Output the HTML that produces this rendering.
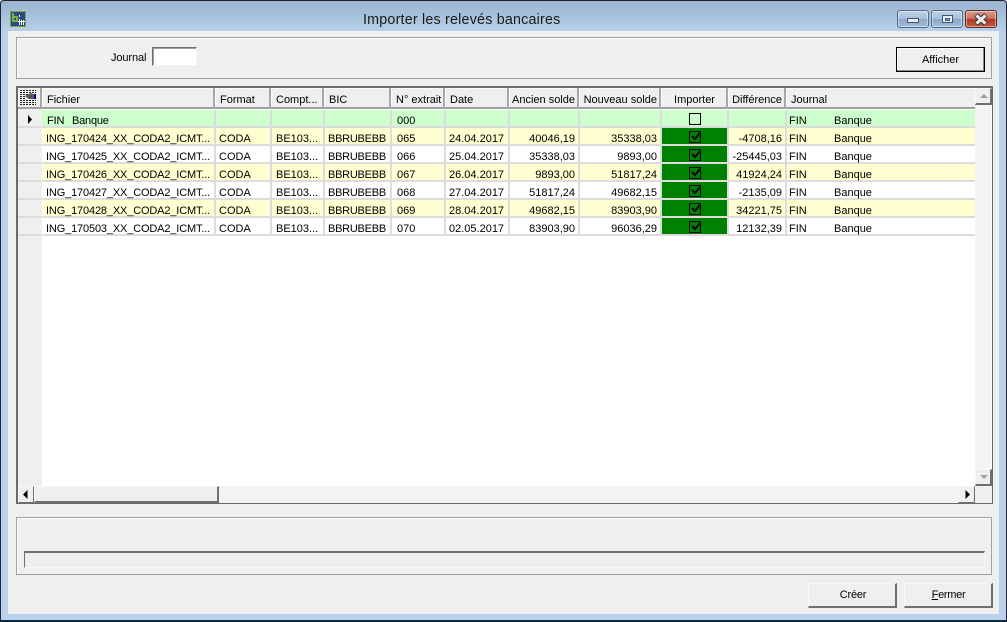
<!DOCTYPE html>
<html lang="fr"><head><meta charset="utf-8"><title>Importer les relevés bancaires</title>
<style>
*{box-sizing:border-box}
html,body{margin:0;padding:0}
body{width:1007px;height:622px;position:relative;overflow:hidden;background:#b9d1ea;font:11px "Liberation Sans",sans-serif;color:#000}
.a{position:absolute}
.t{position:absolute;white-space:nowrap;line-height:14px}
#frame{left:0;top:0;width:1007px;height:622px;background:linear-gradient(#99b4d1 0,#a3bcd8 10px,#b9d1ea 31px,#b9d1ea 100%);border-top:1px solid #222;border-left:1px solid #223;border-right:1px solid #223;border-bottom:2px solid #0c2a3a;border-radius:4px 4px 0 0}
#client{left:8px;top:31px;width:991px;height:583px;background:#efefef}
.panel{border:1px solid #a0a0a0;box-shadow:inset 1px 1px 0 #fff}
.raised{background:#efefef;border:1px solid;border-color:#f8f8f8 #707070 #707070 #f8f8f8}
.wb{position:absolute;top:10px;height:18px;border-radius:3px;border:1px solid #4f6a8a;box-shadow:inset 0 0 0 1px rgba(255,255,255,.45);background:linear-gradient(#bdd0e4 0,#aac2db 48%,#8aa8c8 50%,#a2bcd8 100%)}
.hd{position:absolute;top:88px;height:21px;background:#efefef;border-right:2px solid #a8a8a8;border-bottom:2px solid #a0a0a0;box-shadow:inset 1px 1px 0 #fbfbfb;padding-left:5px;line-height:25px;white-space:nowrap}
.r{position:absolute;left:42px;width:933px;height:18px;border-bottom:2px solid #dcdcdc;white-space:nowrap;line-height:16px}
.r span{position:absolute;top:3px;white-space:nowrap}
.r span:nth-of-type(1){letter-spacing:-.15px}
.y span:nth-of-type(4),.w span:nth-of-type(4){letter-spacing:-.25px}
.r i{position:absolute;top:0;bottom:0;width:2px;background:#dcdcdc}
.ind{position:absolute;left:18px;width:23px;height:18px;background:#efefef;border-bottom:2px solid #dcdcdc}
.y{background:#ffffd2}.w{background:#fff}.g{background:#ccffcc}
.n{text-align:right}
.gr{position:absolute;left:620px;width:65px;top:0;height:16px;background:#008000}
.cb{position:absolute;left:647px;top:3px;width:12px;height:12px;border:1px solid #000}
.btn{position:absolute;text-align:center;line-height:23px}
.dith{background:repeating-conic-gradient(#ececec 0 25%,#fbfbfb 0 50%) 0 0/2px 2px}
</style></head><body>
<div id="frame" class="a"></div>
<div class="a" style="left:10px;top:11px;width:16px;height:16px;background:#2b4a86;border:1px solid #7fa63a">
 <svg width="14" height="14" style="position:absolute;left:0;top:0"><path d="M2 1v8h4V5H2" fill="none" stroke="#9ccc3c" stroke-width="1.500"/><path d="M8 3h1v2H8zM8 7h1v6H8zM10 8h1v5h-1zM12 8h1v5h-1zM7 9h7v1H7z" fill="#fff"/></svg>
</div>
<div class="t" style="left:363px;top:11px;font-size:14.3px;line-height:18px;color:#1a1a1a;letter-spacing:.2px">Importer les relevés bancaires</div>

<div class="wb" style="left:897px;width:32px"><div class="a" style="left:9px;top:7px;width:12px;height:5px;background:#e8eef5;border:1px solid #44556a"></div></div>
<div class="wb" style="left:931px;width:32px"><div class="a" style="left:10px;top:4px;width:11px;height:8px;background:#e8eef5;border:1px solid #44556a"></div><div class="a" style="left:13px;top:7px;width:5px;height:3px;background:#8aa8c8;border:1px solid #44556a"></div></div>
<div class="wb" style="left:965px;width:32px;border-color:#5e2a22;background:linear-gradient(#d9998c 0,#c9705f 48%,#b03a22 50%,#c4563c 100%)">
 <svg class="a" style="left:7px;top:2px" width="17" height="13"><path d="M3 2l10 9M13 2L3 11" stroke="#3a3a3a" stroke-width="5"/><path d="M3.500 2.500l9 8M12.500 2.500l-9 8" stroke="#eee" stroke-width="3"/></svg>
</div>

<div id="client" class="a"></div>
<div class="a panel" style="left:16px;top:37px;width:976px;height:42px"></div>
<div class="t" style="left:111px;top:51px;letter-spacing:-.1px">Journal</div>
<div class="a" style="left:152px;top:47px;width:45px;height:19px;background:#fff;border:1px solid;border-color:#707070 #f4f4f4 #f4f4f4 #707070;box-shadow:inset 1px 1px 0 #a0a0a0"></div>
<div class="btn" style="left:896px;top:47px;width:89px;height:25px;line-height:25px;border:1px solid #000;box-shadow:inset -1px -1px 0 #8a8a8a,inset 1px 1px 0 #fff;background:#efefef">Afficher</div>

<!-- grid -->
<div class="a" style="left:16px;top:86px;width:977px;height:418px;background:#fff;border:1px solid #6a6a6a;border-top-width:2px;border-left-width:2px"></div>
<div class="a" style="left:18px;top:88px;width:24px;height:398px;background:#efefef"></div>
<div class="hd" style="left:18px;width:24px;padding:0">
 <svg width="17" height="15" style="position:absolute;left:2px;top:2px"><path d="M0 .5h16M0 2.500h16M0 4.500h9M0 6.500h6M0 8.500h6M0 10.500h16M0 12.500h16M0 14.500h16" stroke="#222" stroke-dasharray="2 1"/><path d="M5 6l6-3 4 2v4H9z" fill="#555"/><rect x="14" y="4" width="2" height="5" fill="#00009a"/></svg>
</div>
<div class="hd" style="left:42px;width:173px">Fichier</div>
<div class="hd" style="left:215px;width:56px">Format</div>
<div class="hd" style="left:271px;width:53px">Compt...</div>
<div class="hd" style="left:324px;width:67px">BIC</div>
<div class="hd" style="left:391px;width:54px">N° extrait</div>
<div class="hd" style="left:445px;width:64px">Date</div>
<div class="hd" style="left:509px;width:70px;padding:0 2px;text-align:right">Ancien solde</div>
<div class="hd" style="left:579px;width:82px;padding:0 2px;text-align:right">Nouveau solde</div>
<div class="hd" style="left:661px;width:67px;padding:0 0 0 2px;text-align:center">Importer</div>
<div class="hd" style="left:728px;width:58px;padding:0 2px;text-align:right">Différence</div>
<div class="hd" style="left:786px;width:189px;border-right:0">Journal</div>

<div class="ind" style="top:110px"><svg class="a" style="left:9px;top:5px" width="6" height="9"><path d="M1 0l4 4.500-4 4.500z" fill="#000"/></svg></div>
<div class="ind" style="top:128px"></div><div class="ind" style="top:146px"></div><div class="ind" style="top:164px"></div><div class="ind" style="top:182px"></div><div class="ind" style="top:200px"></div><div class="ind" style="top:218px"></div>

<div class="r g" style="top:110px"><i style="left:172px"></i><i style="left:228px"></i><i style="left:281px"></i><i style="left:348px"></i><i style="left:402px"></i><i style="left:466px"></i><i style="left:536px"></i><i style="left:618px"></i><i style="left:685px"></i><i style="left:743px"></i>
<span style="left:5px">FIN</span><span style="left:30px;letter-spacing:-.2px">Banque</span><span style="left:355px">000</span><div class="cb"></div><span style="left:747px">FIN</span><span style="left:792px">Banque</span></div>

<div class="r y" style="top:128px"><i style="left:172px"></i><i style="left:228px"></i><i style="left:281px"></i><i style="left:348px"></i><i style="left:402px"></i><i style="left:466px"></i><i style="left:536px"></i><i style="left:618px"></i><i style="left:685px"></i><i style="left:743px"></i>
<span style="left:4px">ING_170424_XX_CODA2_ICMT...</span><span style="left:177px">CODA</span><span style="left:234px">BE103...</span><span style="left:286px">BBRUBEBB</span><span style="left:355px">065</span><span style="left:407px">24.04.2017</span><span class="n" style="right:400px">40046,19</span><span class="n" style="right:318px">35338,03</span><div class="gr"></div><div class="cb"><svg class="a" style="left:1px;top:0" width="10" height="10"><path d="M1 4l3 3 5-6" fill="none" stroke="#000" stroke-width="2"/></svg></div><span class="n" style="right:193px">-4708,16</span><span style="left:747px">FIN</span><span style="left:792px">Banque</span></div>

<div class="r w" style="top:146px"><i style="left:172px"></i><i style="left:228px"></i><i style="left:281px"></i><i style="left:348px"></i><i style="left:402px"></i><i style="left:466px"></i><i style="left:536px"></i><i style="left:618px"></i><i style="left:685px"></i><i style="left:743px"></i>
<span style="left:4px">ING_170425_XX_CODA2_ICMT...</span><span style="left:177px">CODA</span><span style="left:234px">BE103...</span><span style="left:286px">BBRUBEBB</span><span style="left:355px">066</span><span style="left:407px">25.04.2017</span><span class="n" style="right:400px">35338,03</span><span class="n" style="right:318px">9893,00</span><div class="gr"></div><div class="cb"><svg class="a" style="left:1px;top:0" width="10" height="10"><path d="M1 4l3 3 5-6" fill="none" stroke="#000" stroke-width="2"/></svg></div><span class="n" style="right:193px">-25445,03</span><span style="left:747px">FIN</span><span style="left:792px">Banque</span></div>

<div class="r y" style="top:164px"><i style="left:172px"></i><i style="left:228px"></i><i style="left:281px"></i><i style="left:348px"></i><i style="left:402px"></i><i style="left:466px"></i><i style="left:536px"></i><i style="left:618px"></i><i style="left:685px"></i><i style="left:743px"></i>
<span style="left:4px">ING_170426_XX_CODA2_ICMT...</span><span style="left:177px">CODA</span><span style="left:234px">BE103...</span><span style="left:286px">BBRUBEBB</span><span style="left:355px">067</span><span style="left:407px">26.04.2017</span><span class="n" style="right:400px">9893,00</span><span class="n" style="right:318px">51817,24</span><div class="gr"></div><div class="cb"><svg class="a" style="left:1px;top:0" width="10" height="10"><path d="M1 4l3 3 5-6" fill="none" stroke="#000" stroke-width="2"/></svg></div><span class="n" style="right:193px">41924,24</span><span style="left:747px">FIN</span><span style="left:792px">Banque</span></div>

<div class="r w" style="top:182px"><i style="left:172px"></i><i style="left:228px"></i><i style="left:281px"></i><i style="left:348px"></i><i style="left:402px"></i><i style="left:466px"></i><i style="left:536px"></i><i style="left:618px"></i><i style="left:685px"></i><i style="left:743px"></i>
<span style="left:4px">ING_170427_XX_CODA2_ICMT...</span><span style="left:177px">CODA</span><span style="left:234px">BE103...</span><span style="left:286px">BBRUBEBB</span><span style="left:355px">068</span><span style="left:407px">27.04.2017</span><span class="n" style="right:400px">51817,24</span><span class="n" style="right:318px">49682,15</span><div class="gr"></div><div class="cb"><svg class="a" style="left:1px;top:0" width="10" height="10"><path d="M1 4l3 3 5-6" fill="none" stroke="#000" stroke-width="2"/></svg></div><span class="n" style="right:193px">-2135,09</span><span style="left:747px">FIN</span><span style="left:792px">Banque</span></div>

<div class="r y" style="top:200px"><i style="left:172px"></i><i style="left:228px"></i><i style="left:281px"></i><i style="left:348px"></i><i style="left:402px"></i><i style="left:466px"></i><i style="left:536px"></i><i style="left:618px"></i><i style="left:685px"></i><i style="left:743px"></i>
<span style="left:4px">ING_170428_XX_CODA2_ICMT...</span><span style="left:177px">CODA</span><span style="left:234px">BE103...</span><span style="left:286px">BBRUBEBB</span><span style="left:355px">069</span><span style="left:407px">28.04.2017</span><span class="n" style="right:400px">49682,15</span><span class="n" style="right:318px">83903,90</span><div class="gr"></div><div class="cb"><svg class="a" style="left:1px;top:0" width="10" height="10"><path d="M1 4l3 3 5-6" fill="none" stroke="#000" stroke-width="2"/></svg></div><span class="n" style="right:193px">34221,75</span><span style="left:747px">FIN</span><span style="left:792px">Banque</span></div>

<div class="r w" style="top:218px"><i style="left:172px"></i><i style="left:228px"></i><i style="left:281px"></i><i style="left:348px"></i><i style="left:402px"></i><i style="left:466px"></i><i style="left:536px"></i><i style="left:618px"></i><i style="left:685px"></i><i style="left:743px"></i>
<span style="left:4px">ING_170503_XX_CODA2_ICMT...</span><span style="left:177px">CODA</span><span style="left:234px">BE103...</span><span style="left:286px">BBRUBEBB</span><span style="left:355px">070</span><span style="left:407px">02.05.2017</span><span class="n" style="right:400px">83903,90</span><span class="n" style="right:318px">96036,29</span><div class="gr"></div><div class="cb"><svg class="a" style="left:1px;top:0" width="10" height="10"><path d="M1 4l3 3 5-6" fill="none" stroke="#000" stroke-width="2"/></svg></div><span class="n" style="right:193px">12132,39</span><span style="left:747px">FIN</span><span style="left:792px">Banque</span></div>

<!-- vertical scrollbar -->
<div class="a dith" style="left:975px;top:88px;width:16px;height:398px"></div>
<div class="a raised" style="left:975px;top:88px;width:17px;height:17px;border-right-width:2px;border-bottom-width:2px"><svg class="a" style="left:4px;top:5px" width="8" height="5"><path d="M4 0l4 4H0z" fill="#a0a0a0"/></svg></div>
<div class="a raised" style="left:975px;top:469px;width:17px;height:17px;border-right-width:2px;border-bottom-width:2px"><svg class="a" style="left:4px;top:5px" width="8" height="5"><path d="M0 0h8L4 4z" fill="#a0a0a0"/></svg></div>
<!-- horizontal scrollbar -->
<div class="a dith" style="left:218px;top:486px;width:741px;height:17px"></div>
<div class="a raised" style="left:18px;top:486px;width:16px;height:17px"><svg class="a" style="left:4px;top:3px" width="5" height="9"><path d="M4.500 0v9L0 4.500z" fill="#000"/></svg></div>
<div class="a raised" style="left:34px;top:486px;width:185px;height:17px;border-right-width:2px;border-bottom-width:2px"></div>
<div class="a raised" style="left:958px;top:486px;width:17px;height:17px"><svg class="a" style="left:6px;top:3px" width="5" height="9"><path d="M.5 0v9L5 4.500z" fill="#000"/></svg></div>
<div class="a" style="left:975px;top:486px;width:17px;height:17px;background:#efefef"></div>

<div class="a panel" style="left:16px;top:517px;width:976px;height:58px"></div>
<div class="a" style="left:24px;top:551px;width:961px;height:17px;background:#efefef;border:1px solid;border-color:#707070 #f8f8f8 #f8f8f8 #707070;border-top-width:2px"></div>

<div class="btn raised" style="left:808px;top:583px;width:89px;height:25px;border-right-width:2px;border-bottom-width:2px;padding-left:2px;letter-spacing:-.2px">Créer</div>
<div class="btn raised" style="left:904px;top:583px;width:89px;height:25px;border-right-width:2px;border-bottom-width:2px;padding-left:1px;letter-spacing:-.3px"><u>F</u>ermer</div>
</body></html>
